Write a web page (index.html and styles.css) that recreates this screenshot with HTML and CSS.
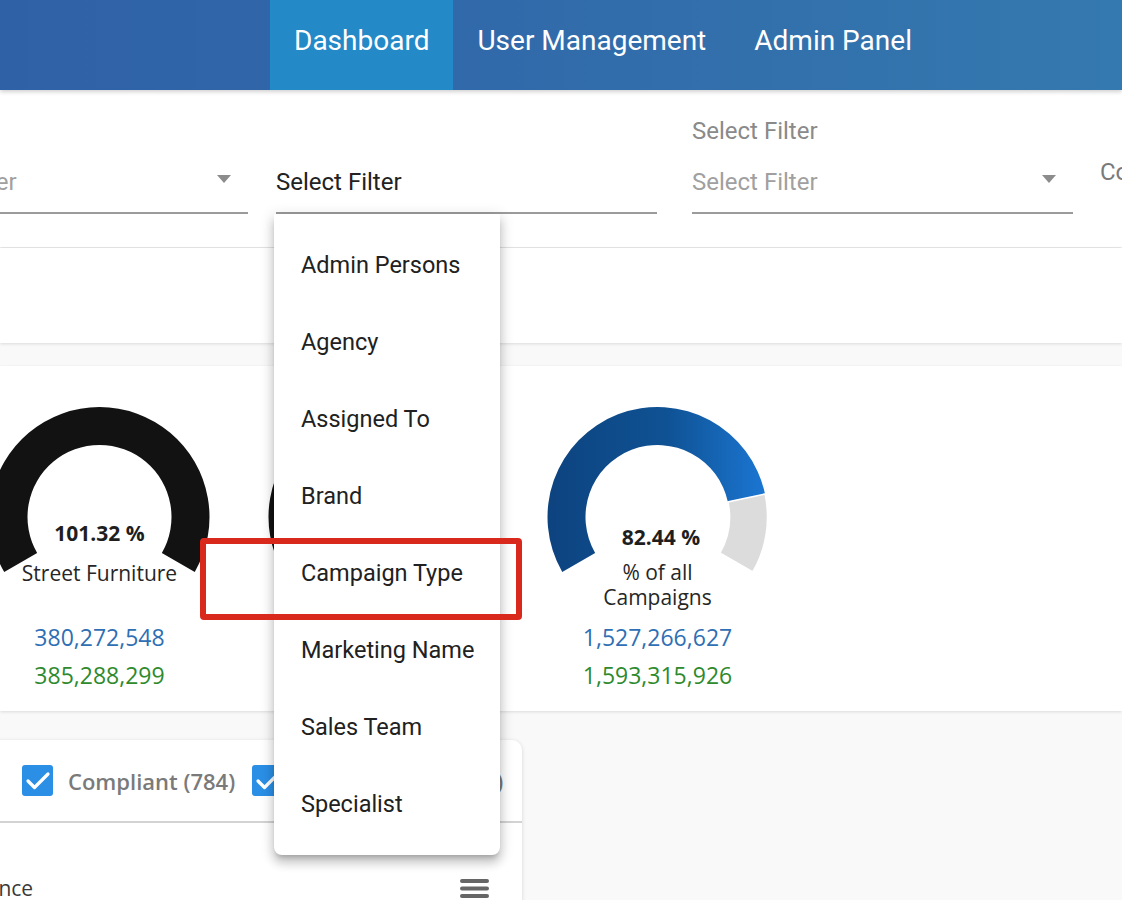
FILE: index.html
```html
<!DOCTYPE html>
<html lang="en">
<head>
<meta charset="utf-8">
<title>Dashboard</title>
<link rel="stylesheet" href="styles.css">
</head>
<body>
<div class="viewport">
  <header class="nav">
    <a class="tab active">Dashboard</a>
    <a class="tab">User Management</a>
    <a class="tab">Admin Panel</a>
  </header>

  <main class="main">
    <section class="card filters">
      <div class="field f1">
        <div class="flabel"></div>
        <div class="fvalue"><span class="placeholder">Select Filter</span><span class="caret"></span></div>
      </div>
      <div class="field f2">
        <div class="flabel"></div>
        <div class="fvalue"><span class="value">Select Filter</span></div>
        <ul class="menu">
          <li>Admin Persons</li>
          <li>Agency</li>
          <li>Assigned To</li>
          <li>Brand</li>
          <li>Campaign Type</li>
          <li>Marketing Name</li>
          <li>Sales Team</li>
          <li>Specialist</li>
        </ul>
      </div>
      <div class="field f3">
        <div class="flabel">Select Filter</div>
        <div class="fvalue"><span class="placeholder">Select Filter</span><span class="caret"></span></div>
      </div>
      <div class="field f4">Compliance Date</div>
    </section>

    <section class="card blank"></section>

    <section class="card gauges">
      <div class="gauge">
        <svg class="ring" width="279" height="218" viewBox="0 0 279 218">
          <path fill="#121212" d="M44.24 172 A110 110 0 1 1 234.76 172 L201.85 153 A72 72 0 1 0 77.15 153 Z"/>
          <text class="pct" x="139.5" y="133" text-anchor="middle" dominant-baseline="central">101.32 %</text>
          <text class="lbl" x="139.5" y="173" text-anchor="middle" dominant-baseline="central">Street Furniture</text>
        </svg>
        <div class="nums"><div class="blue">380,272,548</div><div class="green">385,288,299</div></div>
      </div>
      <div class="gauge">
        <svg class="ring" width="279" height="218" viewBox="0 0 279 218">
          <path fill="#121212" d="M44.24 172 A110 110 0 1 1 234.76 172 L201.85 153 A72 72 0 1 0 77.15 153 Z"/>
        </svg>
      </div>
      <div class="gauge">
        <svg class="ring" width="279" height="218" viewBox="0 0 279 218">
          <defs>
            <linearGradient id="blueGrad" x1="0" y1="0.5" x2="1" y2="0.5">
              <stop offset="0" stop-color="#0d437f"/>
              <stop offset="0.55" stop-color="#0f5294"/>
              <stop offset="1" stop-color="#1b76d2"/>
            </linearGradient>
          </defs>
          <path fill="url(#blueGrad)" d="M44.24 172 A110 110 0 1 1 247.06 93.94 L209.90 101.91 A72 72 0 1 0 77.15 153 Z"/>
          <path fill="#dcdcdc" stroke="#ffffff" stroke-width="1.5" d="M247.06 93.94 A110 110 0 0 1 234.76 172 L201.85 153 A72 72 0 0 0 209.90 101.91 Z"/>
          <text class="pct" x="143" y="137" text-anchor="middle" dominant-baseline="central">82.44 %</text>
          <text class="lbl" x="139.5" y="172" text-anchor="middle" dominant-baseline="central">% of all</text>
          <text class="lbl" x="139.5" y="197" text-anchor="middle" dominant-baseline="central">Campaigns</text>
        </svg>
        <div class="nums"><div class="blue">1,527,266,627</div><div class="green">1,593,315,926</div></div>
      </div>
    </section>

    <section class="card chart">
      <div class="legend">
        <div class="legend-item">
          <svg class="check" width="31" height="31" viewBox="0 0 31 31"><rect width="31" height="31" rx="3" fill="#2b8fe6"/><path d="M6 16 L12.5 22.5 L26 9" fill="none" stroke="#fff" stroke-width="3.2" stroke-linecap="round" stroke-linejoin="round"/></svg>
          <span>Compliant (784)</span>
        </div>
        <div class="legend-item">
          <svg class="check" width="31" height="31" viewBox="0 0 31 31"><rect width="31" height="31" rx="3" fill="#2b8fe6"/><path d="M6 16 L12.5 22.5 L26 9" fill="none" stroke="#fff" stroke-width="3.2" stroke-linecap="round" stroke-linejoin="round"/></svg>
          <span>Non Compliant (12)</span>
        </div>
      </div>
      <div class="chart-head">
        <span class="chart-title">Compliance</span>
        <svg class="menu-icon" width="29" height="20" viewBox="0 0 29 20"><rect x="0" y="1" width="29" height="4" rx="2" fill="#666"/><rect x="0" y="8.5" width="29" height="4" rx="2" fill="#666"/><rect x="0" y="16" width="29" height="4" rx="2" fill="#666"/></svg>
      </div>
    </section>
  </main>

  <div class="annotation"></div>
</div>
</body>
</html>
```

FILE: styles.css
```css
* { box-sizing: border-box; }

html, body {
  margin: 0;
  padding: 0;
  background: #f9f9f9;
  font-family: Roboto, "Noto Sans", sans-serif;
}

.viewport {
  position: relative;
  width: 1122px;
  height: 900px;
  overflow: hidden;
}

/* ---------- top navigation ---------- */
.nav {
  position: relative;
  z-index: 2;
  height: 90px;
  display: flex;
  padding-left: 270px;
  background: linear-gradient(90deg, #2f61a7 0%, #316aaa 45%, #3479af 100%);
  box-shadow: 0 2px 4px rgba(0, 0, 0, 0.18);
}

.tab {
  display: flex;
  align-items: center;
  padding: 0 24px 10px;
  color: #ffffff;
  font-size: 28px;
  text-decoration: none;
  white-space: nowrap;
}

.tab.active {
  background: #2389c7;
}

/* ---------- cards ---------- */
.main {
  display: flex;
  flex-direction: column;
}

.card {
  background: #ffffff;
  box-shadow: 0 1px 3px rgba(0, 0, 0, 0.12);
}

/* ---------- filters ---------- */
.filters {
  display: flex;
  padding: 27px 0 33px;
}

.field {
  position: relative;
  flex-shrink: 0;
  display: flex;
  flex-direction: column;
}

.f1 { margin-left: -109px; width: 357px; }
.f2 { margin-left: 28px; width: 381px; }
.f3 { margin-left: 35px; width: 381px; }
.f4 {
  margin-left: 27px;
  padding-top: 41px;
  font-size: 24px;
  line-height: 28px;
  color: #7a7a7a;
  white-space: nowrap;
}

.flabel {
  height: 28px;
  margin-bottom: 23px;
  font-size: 24px;
  line-height: 28px;
  color: #8a8a8a;
  white-space: nowrap;
}

.fvalue {
  display: flex;
  align-items: center;
  height: 46px;
  padding-bottom: 16px;
  border-bottom: 2px solid #9b9b9b;
  font-size: 24px;
  line-height: 28px;
}

.placeholder {
  flex: 1;
  color: #a0a0a0;
  white-space: nowrap;
}

.value {
  flex: 1;
  color: #222222;
  white-space: nowrap;
}

.caret {
  width: 0;
  height: 0;
  margin-right: 17px;
  margin-bottom: 6px;
  border-left: 7.5px solid transparent;
  border-right: 7.5px solid transparent;
  border-top: 8px solid #8c8c8c;
}

/* ---------- dropdown menu ---------- */
.menu {
  position: absolute;
  z-index: 10;
  top: 100%;
  left: -2px;
  width: 226px;
  margin: 0;
  padding: 13px 0 12px;
  list-style: none;
  background: #ffffff;
  border-radius: 0 0 8px 8px;
  box-shadow: 0 5px 5px -3px rgba(0, 0, 0, 0.2), 0 8px 10px 1px rgba(0, 0, 0, 0.14), 0 3px 14px 2px rgba(0, 0, 0, 0.12);
}

.menu li {
  height: 77px;
  padding-left: 27px;
  font-size: 23.5px;
  line-height: 77px;
  color: #212121;
  white-space: nowrap;
}

/* ---------- blank card ---------- */
.blank {
  height: 95px;
  margin-top: 1px;
}

/* ---------- gauges ---------- */
.gauges {
  display: flex;
  height: 345px;
  margin-top: 23px;
  padding-top: 34px;
}

.gauge {
  flex-shrink: 0;
  width: 279px;
}

.gauge:first-child {
  margin-left: -40px;
}

.ring {
  display: block;
}

.pct {
  font-family: "Open Sans", sans-serif;
  font-weight: 700;
  font-size: 21px;
  fill: #1e1e1e;
}

.lbl {
  font-family: "Open Sans", sans-serif;
  font-size: 21px;
  fill: #262626;
}

.nums {
  font-family: "Open Sans", sans-serif;
  font-size: 23px;
  line-height: 38px;
  text-align: center;
}

.blue { color: #2f6fb3; }
.green { color: #2e8a2c; }

/* ---------- chart card ---------- */
.chart {
  width: 542px;
  height: 200px;
  margin-top: 29px;
  margin-left: -20px;
  border-radius: 0 10px 0 0;
  box-shadow: 0 1px 4px rgba(0, 0, 0, 0.15);
}

.legend {
  display: flex;
  align-items: center;
  padding: 25px 0 25px 42px;
  border-bottom: 2px solid #d3d3d3;
}

.legend-item {
  display: flex;
  align-items: center;
  gap: 15px;
  margin-right: 17px;
  font-family: "Open Sans", sans-serif;
  font-weight: 600;
  font-size: 22px;
  color: #7a7a7a;
  white-space: nowrap;
}

.check {
  display: block;
  flex-shrink: 0;
}

.chart-head {
  display: flex;
  align-items: center;
  justify-content: space-between;
  padding: 50px 33px 0 0;
}

.chart-title {
  margin-left: -62px;
  font-family: "Open Sans", sans-serif;
  font-size: 21px;
  line-height: 30px;
  color: #3a3a3a;
}

.menu-icon {
  display: block;
}

/* ---------- red annotation frame ---------- */
.annotation {
  position: absolute;
  z-index: 20;
  left: 200px;
  top: 538px;
  width: 322px;
  height: 82px;
  border: 6px solid #d9291c;
  border-radius: 4px;
}
```
